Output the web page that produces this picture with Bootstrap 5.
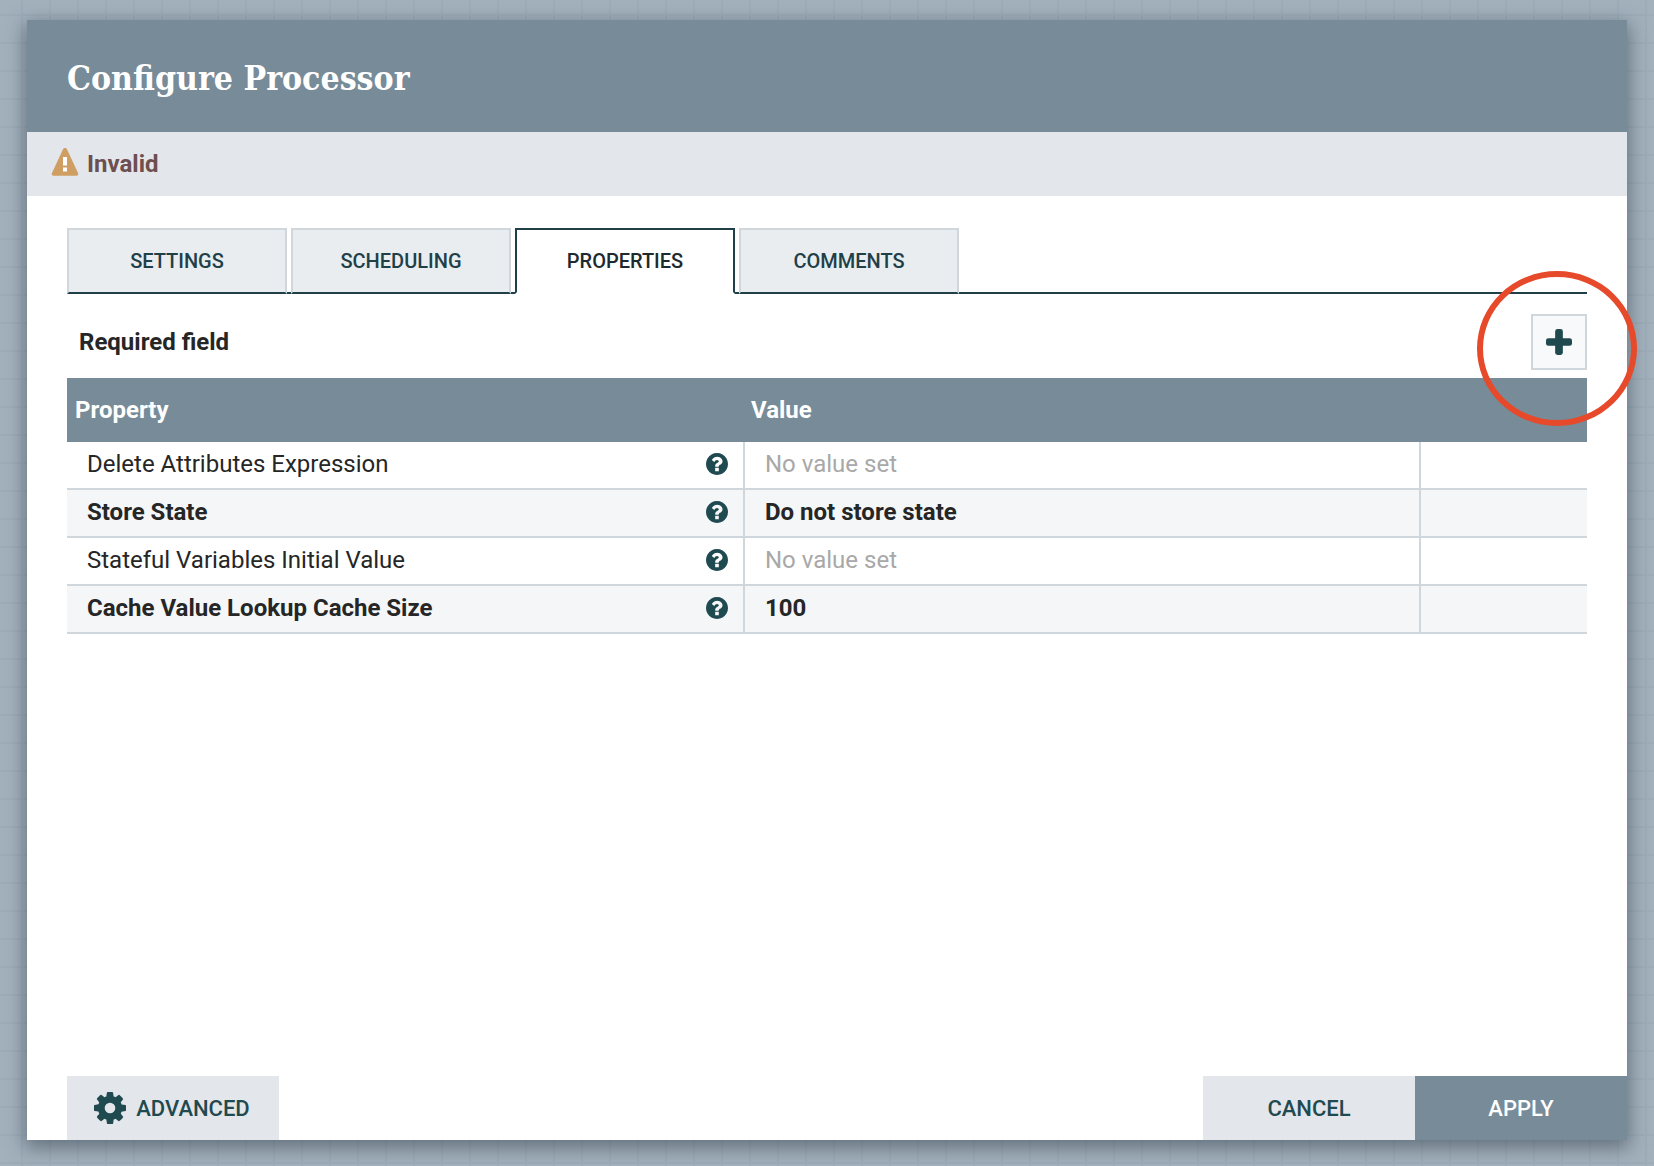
<!doctype html>
<html lang="en">
<head>
    <meta charset="utf-8">
    <meta name="viewport" content="width=device-width, initial-scale=1">
    <title>Configure Processor</title>
    <link href="https://cdn.jsdelivr.net/npm/bootstrap@5.3.3/dist/css/bootstrap.min.css" rel="stylesheet">
    <style>
        html, body {
            height: 1166px;
            overflow: hidden;
        }
        body {
            font-family: Roboto, "Liberation Sans", sans-serif;
            background-color: #a3b1bd;
            background-image:
                linear-gradient(#9dacb8 2px, transparent 2px),
                linear-gradient(90deg, #9dacb8 2px, transparent 2px);
            background-size: 28px 28px;
            background-position: 21px 14px;
            padding: 20px 27px 0;
        }
        .dialog-box {
            position: relative;
            width: 1600px;
            height: 1120px;
            background: #fff;
            box-shadow: 0 6px 18px 2px rgba(50, 62, 75, 0.55);
        }
        .dialog-head {
            height: 112px;
            padding: 6px 0 0 40px;
            background: #778b99;
            color: #fff;
            font-family: "DejaVu Serif Condensed", "DejaVu Serif", serif;
            font-stretch: condensed;
            font-weight: 700;
            font-size: 33.5px;
        }
        .status-bar {
            height: 64px;
            padding-left: 24px;
            background: #e3e6ea;
            color: #6e4f4f;
            font-size: 24px;
            font-weight: 700;
        }
        .warn-icon {
            margin-top: -5px;
        }
        .dialog-body {
            padding: 32px 40px 0;
        }
        .tab-row {
            height: 66px;
            gap: 4px;
            border-bottom: 2px solid #1f4048;
        }
        .tab-item {
            width: 220px;
            height: 66px;
            background: #e9edf0;
            border: 2px solid #cfd6dc;
            border-bottom: 2px solid #1f4048;
            color: #1f4048;
            font-size: 20px;
            font-weight: 500;
        }
        .tab-item.tab-on {
            background: #fff;
            border: 2px solid #1f4048;
            border-bottom-color: #fff;
            color: #1d2a2f;
        }
        .req-row {
            height: 84px;
            padding: 11px 0 0 12px;
            font-size: 24px;
            font-weight: 700;
            color: #262626;
        }
        .add-btn {
            width: 56px;
            height: 56px;
            background: #f8f9fb;
            border: 2px solid #cfd6dc;
        }
        .prop-table {
            width: 100%;
            table-layout: fixed;
            font-size: 24px;
            color: #262626;
        }
        .prop-table th {
            height: 64px;
            padding: 0 8px;
            background: #778b99;
            color: #fff;
            font-weight: 700;
        }
        .prop-table th + th {
            padding-left: 7px;
        }
        .prop-table td {
            height: 48px;
            padding: 0 20px 2px;
            vertical-align: middle;
            border-bottom: 2px solid #cfd6dc;
        }
        .prop-table tbody tr:first-child td {
            height: 47px;
        }
        .prop-table td + td {
            border-left: 2px solid #cfd6dc;
        }
        .prop-table tr.req-prop td {
            background: #f4f6f8;
            font-weight: 700;
        }
        .prop-table .no-val {
            color: #a8a8a8;
        }
        .help-icon {
            width: 22px;
            height: 22px;
            margin: 0 -5px 0 0;
            fill: #1f4a50;
        }
        .foot-btn {
            width: 212px;
            height: 64px;
            background: #e3e6ea;
            color: #1f4a50;
            border: 0;
            border-radius: 0;
            font-size: 22px;
            font-weight: 500;
        }
        .foot-btn.apply-btn {
            background: #778b99;
            color: #fff;
        }
        .gear-icon {
            margin-right: 2px;
        }
        .adv-btn {
            padding: 0 2px 0 0;
        }
        .dialog-foot {
            left: 40px;
            right: 0;
            bottom: 0;
        }
        .red-ring {
            position: absolute;
            left: 1450px;
            top: 251px;
            width: 160px;
            height: 155px;
            border: 6px solid #e64a2b;
            border-radius: 50%;
        }
    </style>
</head>
<body>
    <div class="dialog-box">
        <div class="dialog-head d-flex align-items-center">Configure Processor</div>
        <div class="status-bar d-flex align-items-center gap-2">
            <svg class="warn-icon" width="28" height="28" viewBox="0 0 28 28"><path d="M14 0c.9 0 1.600.5 2 1.200l11 23.800c.7 1.400-.1 2.800-1.700 2.800H2.700c-1.600 0-2.400-1.400-1.700-2.800l11-23.800c.4-.7 1.100-1.200 2-1.200z" fill="#cf9e62"/><rect x="12" y="9" width="4" height="8.500" fill="#fff"/><rect x="12" y="19.500" width="4" height="4" fill="#fff"/></svg>
            <span>Invalid</span>
        </div>
        <div class="dialog-body">
            <div class="tab-row d-flex">
                <div class="tab-item d-flex align-items-center justify-content-center">SETTINGS</div>
                <div class="tab-item d-flex align-items-center justify-content-center">SCHEDULING</div>
                <div class="tab-item tab-on d-flex align-items-center justify-content-center">PROPERTIES</div>
                <div class="tab-item d-flex align-items-center justify-content-center">COMMENTS</div>
            </div>
            <div class="req-row d-flex align-items-center justify-content-between">
                <span>Required field</span>
                <div class="add-btn d-flex align-items-center justify-content-center">
                    <svg width="26" height="26" viewBox="0 0 27 27" fill="#1f4a50"><rect x="9.500" y="0" width="8" height="27" rx="2.500"/><rect x="0" y="9.500" width="27" height="8" rx="2.500"/></svg>
                </div>
            </div>
            <table class="prop-table">
                <colgroup><col style="width:677px"><col style="width:676px"><col></colgroup>
                <thead>
                    <tr><th>Property</th><th>Value</th><th></th></tr>
                </thead>
                <tbody id="propRows"></tbody>
            </table>
        </div>
        <div class="dialog-foot position-absolute d-flex justify-content-between">
            <button class="foot-btn adv-btn btn d-flex align-items-center justify-content-center gap-2">
                <svg class="gear-icon" width="32" height="32" viewBox="128 128 1536 1536" fill="#1f4a50"><path d="M1152 896q0-106-75-181t-181-75-181 75-75 181 75 181 181 75 181-75 75-181zm512-109v222q0 12-8 23t-20 13l-185 28q-19 54-39 91 35 50 107 138 10 12 10 25t-9 23q-27 37-99 108t-94 71q-12 0-26-9l-138-108q-44 23-91 38-16 136-29 186-7 28-36 28h-222q-14 0-24.500-8.500t-11.500-21.500l-28-184q-49-16-90-37l-141 107q-10 9-25 9-14 0-25-11-126-114-165-168-7-10-7-23 0-12 8-23 15-21 51-66.500t54-70.500q-27-50-41-99l-183-27q-13-2-21-12.500t-8-23.500v-222q0-12 8-23t19-13l186-28q14-46 39-92-40-57-107-138-10-12-10-24 0-10 9-23 26-36 98.500-107.500t94.500-71.500q13 0 26 10l138 107q44-23 91-38 16-136 29-186 7-28 36-28h222q14 0 24.500 8.500t11.500 21.500l28 184q49 16 90 37l142-107q9-9 24-9 13 0 25 10 129 119 165 170 7 8 7 22 0 12-8 23-15 21-51 66.500t-54 70.500q26 50 41 98l183 28q13 2 21 12.500t8 23.500z"/></svg>
                ADVANCED
            </button>
            <div class="d-flex">
                <button class="foot-btn btn">CANCEL</button>
                <button class="foot-btn apply-btn btn">APPLY</button>
            </div>
        </div>
        <div class="red-ring"></div>
    </div>

    <script>
        // Property rows, required ones are bold
        const rows = [
            { name: 'Delete Attributes Expression', value: 'No value set', empty: true },
            { name: 'Store State', value: 'Do not store state', req: true },
            { name: 'Stateful Variables Initial Value', value: 'No value set', empty: true },
            { name: 'Cache Value Lookup Cache Size', value: '100', req: true }
        ];
        const helpPath = 'M1024 1376v-192q0-14-9-23t-23-9h-192q-14 0-23 9t-9 23v192q0 14 9 23t23 9h192q14 0 23-9t9-23zm256-672q0-88-55.500-163t-138.500-116-170-41q-243 0-371 213-15 24 8 42l132 100q7 6 19 6 16 0 25-12 53-68 86-92 34-24 86-24 48 0 85.500 26t37.500 59q0 38-20 61t-68 45q-63 28-115.500 86.500t-52.500 125.500v36q0 14 9 23t23 9h192q14 0 23-9t9-23q0-19 21.500-49.500t54.500-49.500q32-18 49-28.500t46-35 44.500-48 28-60.500 12.500-81zm384 192q0 209-103 385.500t-279.500 279.500-385.500 103-385.500-103-279.500-279.500-103-385.500 103-385.500 279.500-279.500 385.500-103 385.500 103 279.500 279.500 103 385.500z';
        document.getElementById('propRows').innerHTML = rows.map(r => `
            <tr class="${r.req ? 'req-prop' : ''}">
                <td><div class="d-flex align-items-center justify-content-between"><span>${r.name}</span>
                    <svg class="help-icon" viewBox="128 128 1536 1536"><path d="${helpPath}"/></svg></div></td>
                <td class="${r.empty ? 'no-val' : ''}">${r.value}</td>
                <td></td>
            </tr>`).join('');
    </script>
    <script src="https://cdn.jsdelivr.net/npm/bootstrap@5.3.3/dist/js/bootstrap.bundle.min.js"></script>
</body>
</html>
